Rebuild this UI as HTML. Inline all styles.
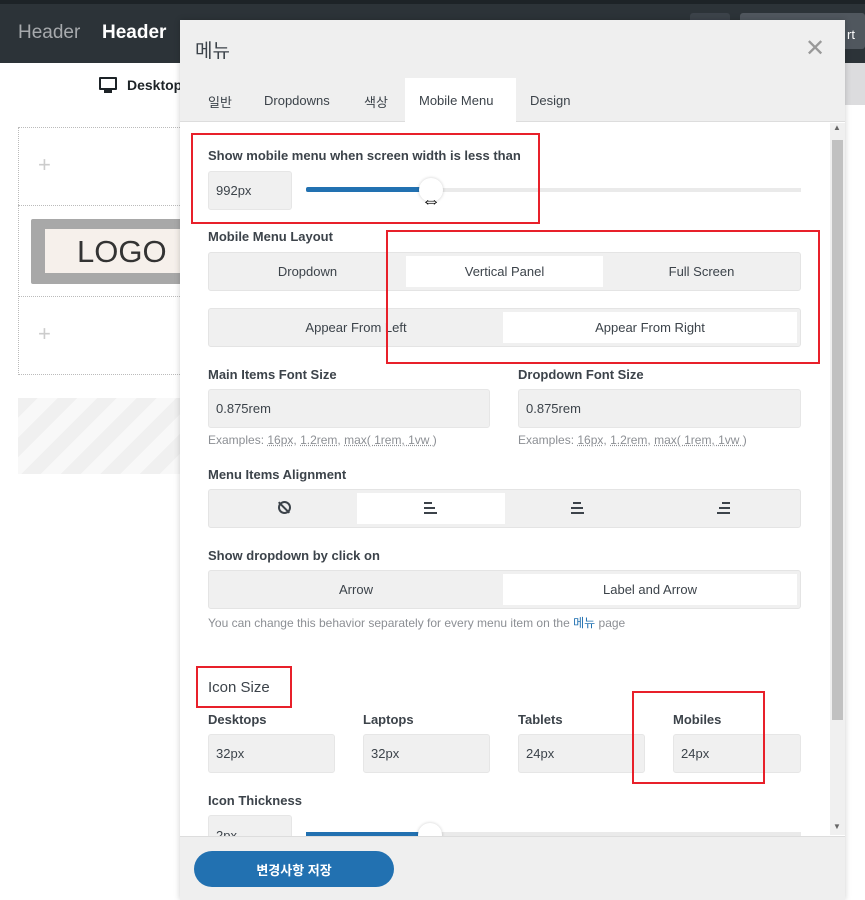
<!DOCTYPE html>
<html><head><meta charset="utf-8"><style>
*{box-sizing:border-box;margin:0;padding:0}
body{width:865px;height:900px;overflow:hidden;position:relative;background:#fff;font-family:"Liberation Sans","Noto Sans CJK KR",sans-serif;color:#3c434a;font-size:14px}
.abs{position:absolute}
.topbar{left:0;top:0;width:865px;height:63px;background:#2c3338}
.lab{font-size:13px;font-weight:bold;color:#3c434a}
.inp{background:#f0f0f0;border:1px solid #e6e6e6;border-radius:3px;font-size:13px;padding-left:7px;display:flex;align-items:center}
.seg{background:#f0f0f0;border:1px solid #e4e4e4;border-radius:3px;display:flex;padding:3px 0}
.seg div{flex:1;display:flex;align-items:center;justify-content:center;font-size:13px}
.seg .on{background:#fff}
.red{border:2px solid #e8202a}
.hint{font-size:12px;color:#8c8f94}
.hint u{text-decoration:underline dotted}
.al{position:absolute;height:2px;background:#3c434a}
</style></head><body>
<div class="abs topbar"></div>
<div class="abs" style="left:0;top:0;width:865px;height:4px;background:#1d2327"></div>
<div class="abs" style="left:18px;top:22px;font-size:19px;color:#a7aaad">Header</div>
<div class="abs" style="left:102px;top:22px;font-size:19px;color:#fff;font-weight:bold">Header</div>
<div class="abs" style="left:690px;top:13px;width:40px;height:36px;background:#3c434a;border-radius:3px"></div>
<div class="abs" style="left:740px;top:13px;width:125px;height:36px;background:#50575e;border-radius:3px;color:#fff;font-size:13px;padding:14px 0 0 107px">rt</div>
<div class="abs" style="left:845px;top:63px;width:20px;height:42px;background:#dcdcde"></div>
<div class="abs" style="left:99px;top:77px;width:18px;height:13px;border:2px solid #1d2327;border-radius:1px"></div>
<div class="abs" style="left:104px;top:90px;width:8px;height:3px;background:#1d2327"></div>
<div class="abs" style="left:127px;top:77px;font-size:14px;font-weight:bold;color:#1d2327">Desktop</div>
<div class="abs" style="left:18px;top:127px;width:170px;height:248px;border:1px dotted #bbb"></div>
<div class="abs" style="left:18px;top:205px;width:170px;height:92px;border-top:1px dotted #bbb;border-bottom:1px dotted #bbb"></div>
<div class="abs" style="left:38px;top:152px;font-size:22px;color:#ccc">+</div>
<div class="abs" style="left:38px;top:321px;font-size:22px;color:#ccc">+</div>
<div class="abs" style="left:31px;top:219px;width:160px;height:65px;background:#a8a8a8;border-radius:2px"></div>
<div class="abs" style="left:45px;top:229px;width:140px;height:44px;background:#f6f0eb;font-size:31px;color:#333;padding:5px 0 0 32px">LOGO</div>
<div class="abs" style="left:18px;top:398px;width:170px;height:76px;background:repeating-linear-gradient(135deg,#f0f0f0 0 14px,#f8f8f8 14px 28px)"></div>

<!-- modal -->
<div class="abs" style="left:180px;top:20px;width:665px;height:880px;background:#fff;box-shadow:0 0 6px rgba(0,0,0,.2)"></div>
<div class="abs" style="left:180px;top:20px;width:665px;height:102px;background:#efefef;border-bottom:1px solid #ddd"></div>
<div class="abs" style="left:195px;top:36px;font-size:19px;color:#3c434a">메뉴</div>
<div class="abs" style="left:805px;top:34px;font-size:24px;color:#999">✕</div>
<div class="abs" style="left:405px;top:78px;width:111px;height:45px;background:#fff"></div>
<div class="abs" style="left:208px;top:92px;font-size:13px">일반</div>
<div class="abs" style="left:264px;top:93px;font-size:13px">Dropdowns</div>
<div class="abs" style="left:364px;top:92px;font-size:13px">색상</div>
<div class="abs" style="left:419px;top:93px;font-size:13px">Mobile Menu</div>
<div class="abs" style="left:530px;top:93px;font-size:13px">Design</div>
<div class="abs" style="left:830px;top:123px;width:15px;height:712px;background:#f0f0f0"></div>
<div class="abs" style="left:832px;top:140px;width:11px;height:580px;background:#c1c1c1"></div>
<div class="abs" style="left:833px;top:123px;font-size:8px;color:#666">▲</div>
<div class="abs" style="left:833px;top:822px;font-size:8px;color:#666">▼</div>

<div class="abs lab" style="left:208px;top:148px">Show mobile menu when screen width is less than</div>
<div class="abs inp" style="left:208px;top:171px;width:84px;height:39px">992px</div>
<div class="abs" style="left:306px;top:188px;width:495px;height:4px;background:#eaeaea"></div>
<div class="abs" style="left:306px;top:187px;width:116px;height:5px;background:#2271b1;border-radius:2px"></div>
<div class="abs" style="left:419px;top:178px;width:24px;height:24px;border-radius:50%;background:#fff;box-shadow:0 0 3px rgba(0,0,0,.2)"></div>
<div class="abs" style="left:421px;top:191px;font-size:20px;color:#000;line-height:20px">⇔</div>
<div class="abs red" style="left:191px;top:133px;width:349px;height:91px"></div>

<div class="abs lab" style="left:208px;top:229px">Mobile Menu Layout</div>
<div class="abs seg" style="left:208px;top:252px;width:593px;height:39px"><div>Dropdown</div><div class="on">Vertical Panel</div><div>Full Screen</div></div>
<div class="abs seg" style="left:208px;top:308px;width:593px;height:39px"><div>Appear From Left</div><div class="on" style="margin-right:3px">Appear From Right</div></div>
<div class="abs red" style="left:386px;top:230px;width:434px;height:134px"></div>

<div class="abs lab" style="left:208px;top:367px">Main Items Font Size</div>
<div class="abs lab" style="left:518px;top:367px">Dropdown Font Size</div>
<div class="abs inp" style="left:208px;top:389px;width:282px;height:39px">0.875rem</div>
<div class="abs inp" style="left:518px;top:389px;width:283px;height:39px">0.875rem</div>
<div class="abs hint" style="left:208px;top:433px">Examples: <u>16px</u>, <u>1.2rem</u>, <u>max( 1rem, 1vw )</u></div>
<div class="abs hint" style="left:518px;top:433px">Examples: <u>16px</u>, <u>1.2rem</u>, <u>max( 1rem, 1vw )</u></div>

<div class="abs lab" style="left:208px;top:467px">Menu Items Alignment</div>
<div class="abs seg" style="left:208px;top:489px;width:593px;height:39px"><div></div><div class="on"></div><div></div><div></div></div>
<div class="abs" style="left:278px;top:501px;width:13px;height:13px;border:2px solid #3c434a;border-radius:50%"></div>
<div class="abs" style="left:283px;top:500px;width:2px;height:15px;background:#3c434a;transform:rotate(-45deg)"></div>
<div class="al" style="left:424px;top:502px;width:8px"></div><div class="al" style="left:424px;top:507px;width:11px"></div><div class="al" style="left:424px;top:512px;width:13px"></div>
<div class="al" style="left:573px;top:502px;width:8px"></div><div class="al" style="left:571px;top:507px;width:12px"></div><div class="al" style="left:571px;top:512px;width:13px"></div>
<div class="al" style="left:722px;top:502px;width:8px"></div><div class="al" style="left:719px;top:507px;width:11px"></div><div class="al" style="left:717px;top:512px;width:13px"></div>

<div class="abs lab" style="left:208px;top:548px">Show dropdown by click on</div>
<div class="abs seg" style="left:208px;top:570px;width:593px;height:39px"><div>Arrow</div><div class="on" style="margin-right:3px">Label and Arrow</div></div>
<div class="abs hint" style="left:208px;top:614px">You can change this behavior separately for every menu item on the <span style="color:#2271b1">메뉴</span> page</div>

<div class="abs" style="left:208px;top:679px;font-size:15px">Icon Size</div>
<div class="abs red" style="left:196px;top:666px;width:96px;height:42px"></div>
<div class="abs lab" style="left:208px;top:712px">Desktops</div>
<div class="abs lab" style="left:363px;top:712px">Laptops</div>
<div class="abs lab" style="left:518px;top:712px">Tablets</div>
<div class="abs lab" style="left:673px;top:712px">Mobiles</div>
<div class="abs inp" style="left:208px;top:734px;width:127px;height:39px">32px</div>
<div class="abs inp" style="left:363px;top:734px;width:127px;height:39px">32px</div>
<div class="abs inp" style="left:518px;top:734px;width:127px;height:39px">24px</div>
<div class="abs inp" style="left:673px;top:734px;width:128px;height:39px">24px</div>
<div class="abs red" style="left:632px;top:691px;width:133px;height:93px"></div>
<div class="abs lab" style="left:208px;top:793px">Icon Thickness</div>
<div class="abs inp" style="left:208px;top:815px;width:84px;height:39px;align-items:flex-start;padding-top:12px">2px</div>
<div class="abs" style="left:306px;top:832px;width:495px;height:4px;background:#eaeaea"></div>
<div class="abs" style="left:306px;top:832px;width:114px;height:5px;background:#2271b1"></div>
<div class="abs" style="left:418px;top:823px;width:24px;height:24px;border-radius:50%;background:#fff;box-shadow:0 0 3px rgba(0,0,0,.2)"></div>

<div class="abs" style="left:180px;top:836px;width:665px;height:64px;background:#efefef;border-top:1px solid #ddd"></div>
<div class="abs" style="left:194px;top:851px;width:200px;height:36px;background:#2271b1;border-radius:18px;color:#fff;font-size:13px;font-weight:bold;display:flex;align-items:center;justify-content:center">변경사항 저장</div>
</body></html>
